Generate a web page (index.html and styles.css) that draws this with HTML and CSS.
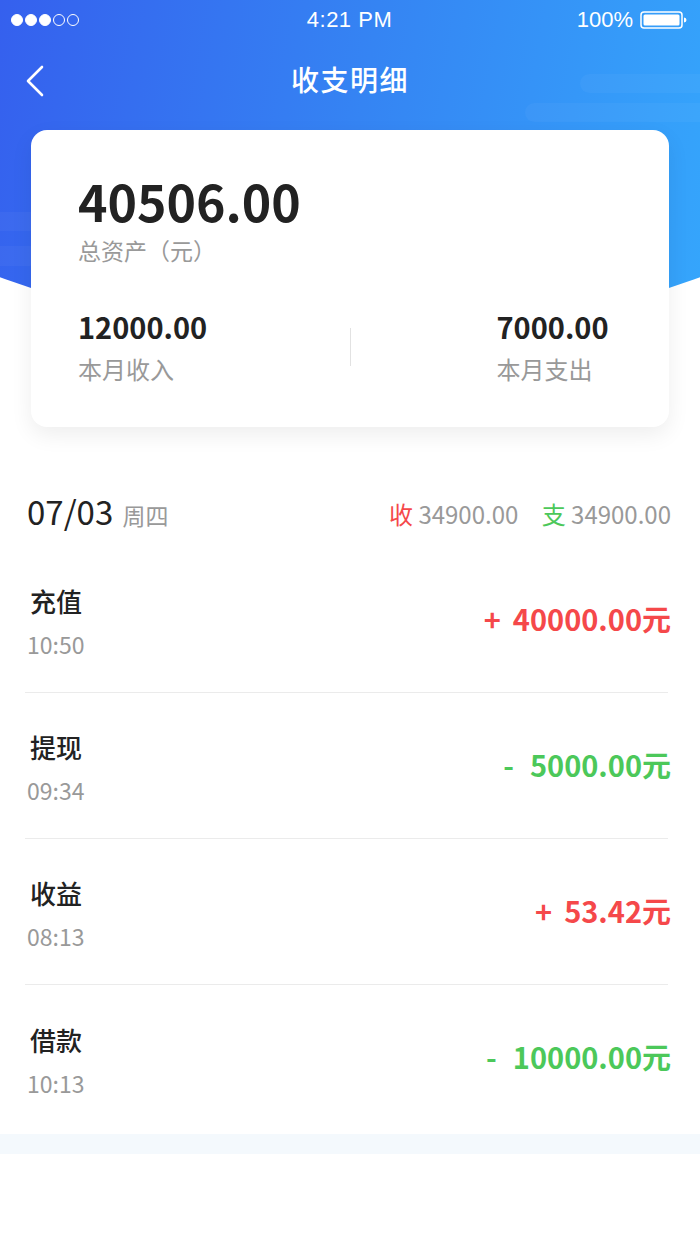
FILE: index.html
```html
<!DOCTYPE html>
<html lang="zh-CN">

<head>
    <meta charset="UTF-8">
    <meta name="viewport" content="width=device-width, initial-scale=1.0">
    <title>收支明细</title>
    <link rel="stylesheet" href="styles.css">
</head>

<body>
    <div class="top">
        <div class="top-bg">
            <span class="cloud c1"></span>
            <span class="cloud c2"></span>
            <span class="cloud c3"></span>
            <span class="cloud c4"></span>
        </div>

        <div class="status-bar">
            <div class="signal">
                <i class="on"></i><i class="on"></i><i class="on"></i><i></i><i></i>
            </div>
            <div class="clock">4:21 PM</div>
            <div class="battery">
                <span>100%</span>
                <svg width="48" height="18" viewBox="0 0 48 18">
                    <rect x="1" y="1" width="41" height="16" rx="3" fill="none" stroke="#fff" stroke-width="1.5"/>
                    <rect x="3.5" y="3.5" width="36" height="11" rx="1.5" fill="#fff"/>
                    <path d="M44 6.5 a2.5 2.5 0 0 1 0 5 z" fill="#fff"/>
                </svg>
            </div>
        </div>

        <div class="nav">
            <a class="back" href="#">
                <svg width="24" height="34" viewBox="0 0 24 34">
                    <polyline points="18,3 4,17 18,31" fill="none" stroke="#fff" stroke-width="2.6" stroke-linecap="round" stroke-linejoin="round"/>
                </svg>
            </a>
            <h1>收支明细</h1>
        </div>

        <div class="summary">
            <div class="total">40506.00</div>
            <div class="total-label">总资产（元）</div>
            <div class="stats">
                <div class="stat">
                    <div class="stat-num">12000.00</div>
                    <div class="stat-label">本月收入</div>
                </div>
                <div class="stat-divider"></div>
                <div class="stat stat-right">
                    <div class="stat-num">7000.00</div>
                    <div class="stat-label">本月支出</div>
                </div>
            </div>
        </div>
    </div>

    <div class="day">
        <div class="day-head">
            <div class="date">07/03 <span class="week">周四</span></div>
            <div class="day-sum">
                <span class="in">收</span> 34900.00
                <span class="out">支</span> 34900.00
            </div>
        </div>

        <div class="records">
            <div class="record">
                <div class="record-info">
                    <div class="record-title">充值</div>
                    <div class="record-time">10:50</div>
                </div>
                <div class="amount plus"><span class="sign">+</span>40000.00元</div>
            </div>
            <div class="record">
                <div class="record-info">
                    <div class="record-title">提现</div>
                    <div class="record-time">09:34</div>
                </div>
                <div class="amount minus"><span class="sign">-</span>5000.00元</div>
            </div>
            <div class="record">
                <div class="record-info">
                    <div class="record-title">收益</div>
                    <div class="record-time">08:13</div>
                </div>
                <div class="amount plus"><span class="sign">+</span>53.42元</div>
            </div>
            <div class="record">
                <div class="record-info">
                    <div class="record-title">借款</div>
                    <div class="record-time">10:13</div>
                </div>
                <div class="amount minus"><span class="sign">-</span>10000.00元</div>
            </div>
        </div>
    </div>

    <div class="band"></div>
</body>

</html>
```

FILE: styles.css
```css
body {
    margin: 0;
    padding: 0;
    background-color: #fff;
    font-family: "Noto Sans CJK SC", "Noto Sans", sans-serif;
    color: #222;
}

.top {
    position: relative;
    isolation: isolate;
}

.top-bg {
    position: absolute;
    left: 0;
    top: 0;
    right: 0;
    height: 340px;
    z-index: -1;
    overflow: hidden;
    background: linear-gradient(100deg, #3560ee 0%, #3584f3 50%, #35a6fc 100%);
    clip-path: ellipse(620px 336px at 50% 0);
}

.cloud {
    position: absolute;
    height: 19px;
    border-radius: 10px;
    background-color: rgba(255, 255, 255, 0.035);
}

.c1 { left: 580px; top: 74px; width: 140px; }
.c2 { left: 525px; top: 103px; width: 190px; }
.c3 { left: -20px; top: 212px; width: 60px; }
.c4 { left: -20px; top: 246px; width: 60px; height: 20px; }

/* status bar */
.status-bar {
    height: 40px;
    display: flex;
    align-items: center;
    justify-content: space-between;
    padding: 0 12px 0 11px;
    color: #fff;
    font-family: "Liberation Sans", Arial, sans-serif;
    font-size: 22px;
}

.signal {
    display: flex;
    gap: 2px;
    width: 140px;
}

.signal i {
    width: 10px;
    height: 10px;
    border: 1.3px solid #fff;
    border-radius: 50%;
}

.signal i.on {
    background-color: #fff;
}

.clock {
    flex: 1;
    text-align: center;
    letter-spacing: 0.5px;
}

.battery {
    width: 140px;
    display: flex;
    align-items: center;
    justify-content: flex-end;
    gap: 7px;
}

.battery svg {
    display: block;
}

/* nav */
.nav {
    height: 80px;
    display: flex;
    align-items: center;
    justify-content: center;
    position: relative;
}

.nav h1 {
    margin: 0 0 2px 0;
    font-size: 28px;
    font-weight: 500;
    color: #fff;
    letter-spacing: 1.5px;
}

.back {
    position: absolute;
    left: 24px;
    top: 24px;
    display: block;
}

.back svg {
    display: block;
}

/* summary card */
.summary {
    margin: 10px 31px 0;
    padding: 40px 47px 42px;
    background-color: #fff;
    border-radius: 16px;
    box-shadow: 0 8px 22px rgba(0, 0, 0, 0.07);
}

.total {
    font-size: 50px;
    font-weight: 700;
    line-height: 60px;
    color: #222;
}

.total-label {
    margin-top: 5px;
    font-size: 23px;
    line-height: 30px;
    color: #999;
}

.stats {
    margin-top: 43px;
    display: grid;
    grid-template-columns: 1fr 1px 1fr;
    align-items: center;
}

.stat-num {
    font-size: 29px;
    font-weight: 700;
    line-height: 36px;
    color: #222;
}

.stat-label {
    margin-top: 9px;
    font-size: 24px;
    line-height: 32px;
    color: #999;
}

.stat-divider {
    height: 38px;
    background-color: #e2e2e2;
}

.stat-right {
    padding-left: 146px;
}

/* day list */
.day {
    margin-top: 66px;
}

.day-head {
    display: flex;
    justify-content: space-between;
    align-items: center;
    height: 40px;
    padding: 0 29px 0 27px;
}

.date {
    font-size: 33px;
    line-height: 40px;
    color: #222;
}

.week {
    font-size: 23px;
    color: #999;
    margin-left: 2px;
}

.day-sum {
    font-size: 24px;
    color: #999;
}

.day-sum .in {
    color: #f5484a;
}

.day-sum .out {
    color: #4cc85a;
    margin-left: 18px;
}

.records {
    margin: 14px 32px 0 25px;
}

.record {
    display: flex;
    justify-content: space-between;
    align-items: center;
    height: 146px;
    box-sizing: border-box;
    padding: 37px 0 33px 5px;
    border-bottom: 1px solid #ebebeb;
}

.record:last-child {
    border-bottom: none;
}

.record-title {
    font-size: 26px;
    font-weight: 500;
    line-height: 34px;
    color: #222;
}

.record-time {
    margin-top: 11px;
    margin-left: -3px;
    font-size: 23px;
    line-height: 30px;
    color: #999;
}

.amount {
    margin: 0 -3px 8px 0;
    font-size: 29px;
    font-weight: 700;
}

.amount .sign {
    margin-right: 12px;
}

.plus {
    color: #f5484a;
}

.minus {
    color: #4cc85a;
}

.minus .sign {
    margin-right: 16px;
}

.band {
    margin-top: 3px;
    height: 20px;
    background-color: #f4f9fd;
}
```
